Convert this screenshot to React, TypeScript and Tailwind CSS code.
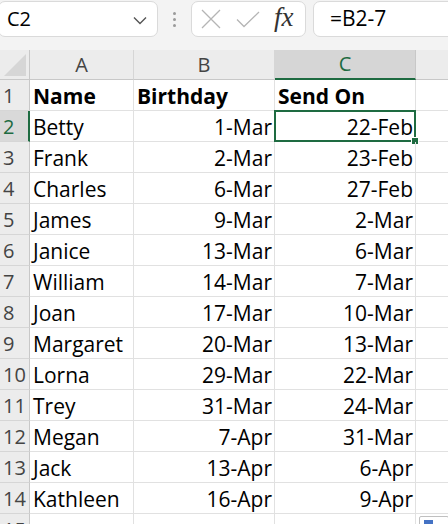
import React from "react";

const rows: [string, string, string][] = [
  ["Betty", "1-Mar", "22-Feb"],
  ["Frank", "2-Mar", "23-Feb"],
  ["Charles", "6-Mar", "27-Feb"],
  ["James", "9-Mar", "2-Mar"],
  ["Janice", "13-Mar", "6-Mar"],
  ["William", "14-Mar", "7-Mar"],
  ["Joan", "17-Mar", "10-Mar"],
  ["Margaret", "20-Mar", "13-Mar"],
  ["Lorna", "29-Mar", "22-Mar"],
  ["Trey", "31-Mar", "24-Mar"],
  ["Megan", "7-Apr", "31-Mar"],
  ["Jack", "13-Apr", "6-Apr"],
  ["Kathleen", "16-Apr", "9-Apr"],
];

const font = { fontFamily: '"Open Sans", "Liberation Sans", sans-serif' };

function RowHeader({ n, sel }: { n: number; sel?: boolean }) {
  return (
    <div
      className={
        "h-[31px] flex items-end pb-[1px] pl-[3px] text-[20px] leading-[26px] border-b border-[#d6d6d6] " +
        (sel
          ? "bg-[#d9d9d9] text-[#1e6b41] border-r-2 border-r-[#1e6b41]"
          : "bg-[#ececec] text-[#444] border-r border-r-[#c8c8c8]")
      }
    >
      {n}
    </div>
  );
}

const cell = "h-[31px] border-r border-b border-[#e1e1e1] flex items-end pb-[1px] text-[21px] leading-[26px] text-black";

export default function App() {
  return (
    <div className="w-[448px] h-[524px] overflow-hidden bg-[#f3f3f3] relative" style={font}>
      {/* toolbar */}
      <div className="h-[50px] flex items-start pt-[1px]">
        <div className="w-[160px] h-[36px] bg-white border border-[#dadada] rounded-[7px] -ml-[2px] flex items-center pl-[8px] pr-[10px]">
          <span className="text-[20px] text-black flex-1">C2</span>
          <svg width="14" height="9" viewBox="0 0 14 9" className="mt-[2px]">
            <path d="M1 1.5 L7 7.5 L13 1.5" stroke="#555" strokeWidth="1.4" fill="none" />
          </svg>
        </div>
        <div className="w-[33px] h-[36px] flex flex-col items-center justify-center gap-[3px]">
          <div className="w-[3px] h-[3px] bg-[#9a9a9a] rounded-full" />
          <div className="w-[3px] h-[3px] bg-[#9a9a9a] rounded-full" />
          <div className="w-[3px] h-[3px] bg-[#9a9a9a] rounded-full" />
        </div>
        <div className="w-[115px] h-[36px] bg-white border border-[#dadada] rounded-[7px] flex items-center pl-[9px]">
          <svg width="20" height="20" viewBox="0 0 20 20">
            <path d="M1 1 L19 19 M19 1 L1 19" stroke="#b5b5b5" strokeWidth="1.3" fill="none" />
          </svg>
          <svg width="24" height="17" viewBox="0 0 24 17" className="ml-[15px]">
            <path d="M1 8.5 L8 15.5 L23 1" stroke="#b5b5b5" strokeWidth="1.3" fill="none" />
          </svg>
          <span
            className="ml-[14px] text-[27px] italic text-[#333] leading-none -mt-[4px]"
            style={{ fontFamily: '"Liberation Serif", serif' }}
          >
            fx
          </span>
        </div>
        <div className="flex-1 h-[36px] bg-white border border-[#dadada] rounded-[7px] ml-[7px] -mr-[10px] flex items-center pl-[16px]">
          <span className="text-[21px] text-black">=B2-7</span>
        </div>
      </div>

      {/* grid */}
      <div className="grid grid-cols-[30px_104px_141px_141px_1fr] bg-white">
        {/* header row */}
        <div className="h-[30px] bg-[#ececec] border-r border-b border-[#c8c8c8] relative">
          <svg width="22" height="22" viewBox="0 0 22 22" className="absolute right-[3px] bottom-[3px]">
            <path d="M22 0 L22 22 L0 22 Z" fill="#d6d6d6" />
          </svg>
        </div>
        <div className="h-[30px] bg-[#ececec] border-r border-[#d6d6d6] border-b border-b-[#c8c8c8] flex items-center justify-center text-[20px] text-[#444]">
          A
        </div>
        <div className="h-[30px] bg-[#ececec] border-r border-[#d6d6d6] border-b border-b-[#c8c8c8] flex items-center justify-center text-[20px] text-[#444]">
          B
        </div>
        <div className="h-[30px] bg-[#d6d6d6] border-r border-[#c8c8c8] border-b-2 border-b-[#1e6b41] flex items-center justify-center text-[20px] text-[#1e6b41]">
          C
        </div>
        <div className="h-[30px] bg-[#ececec] border-b border-[#c8c8c8]" />

        {/* row 1 */}
        <RowHeader n={1} />
        <div className={cell + " pl-[3px] font-bold"}>Name</div>
        <div className={cell + " pl-[3px] font-bold"}>Birthday</div>
        <div className={cell + " pl-[3px] font-bold"}>Send On</div>
        <div className="h-[31px] border-b border-[#e1e1e1]" />

        {rows.map((r, i) => {
          const n = i + 2;
          const sel = n === 2;
          return (
            <React.Fragment key={n}>
              <RowHeader n={n} sel={sel} />
              <div className={cell + " pl-[3px]"}>{r[0]}</div>
              <div className={cell + " justify-end pr-[2px]"}>{r[1]}</div>
              <div className={cell + " justify-end pr-[2px] relative"}>
                {sel && (
                  <>
                    <div className="absolute -left-[1px] -top-[1px] -right-[1px] -bottom-[1px] border-2 border-[#1e6b41] pointer-events-none" />
                    <div className="absolute -right-[4px] -bottom-[4px] w-[6px] h-[6px] bg-[#1e6b41] border border-white box-content" />
                  </>
                )}
                <span className="relative">{r[2]}</span>
              </div>
              <div className="h-[31px] border-b border-[#e1e1e1]" />
            </React.Fragment>
          );
        })}
        <RowHeader n={15} />
        <div className="h-[31px] border-r border-b border-[#e1e1e1]" />
        <div className="h-[31px] border-r border-b border-[#e1e1e1]" />
        <div className="h-[31px] border-r border-b border-[#e1e1e1]" />
        <div className="h-[31px] border-b border-[#e1e1e1] relative">
          <div className="absolute left-[3px] top-[2px] w-[30px] h-[24px] bg-white border border-[#c0c0c0] rounded-[2px]">
            <div className="absolute left-[4px] top-[3px] w-[9px] h-[4px] bg-[#4472c4]" />
          </div>
        </div>
      </div>
    </div>
  );
}
